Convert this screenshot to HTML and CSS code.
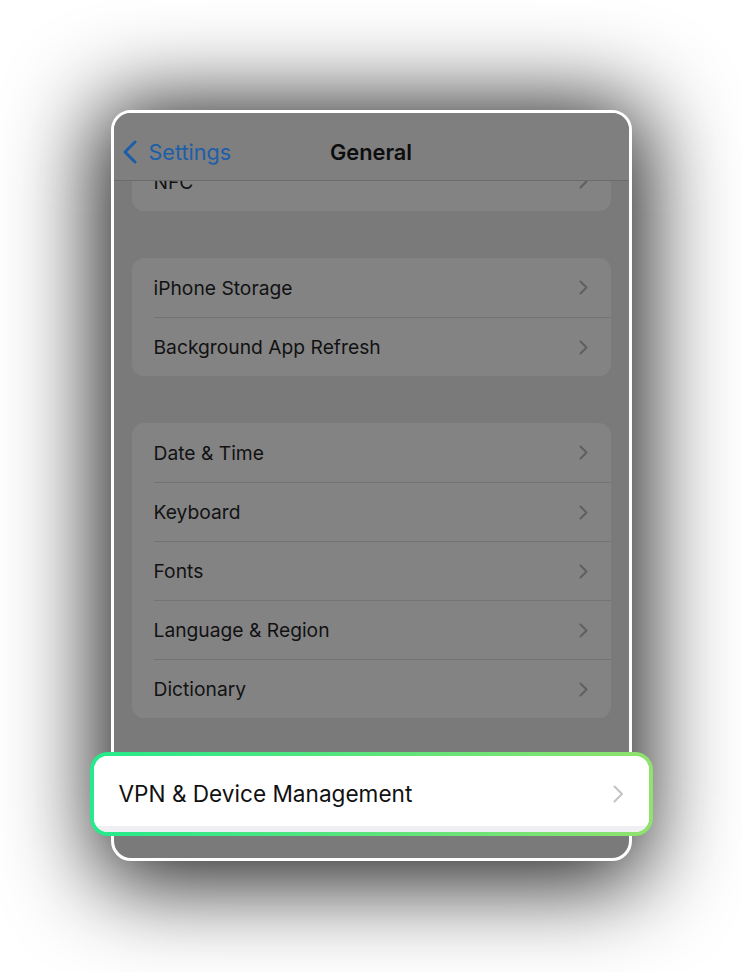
FILE: index.html
```html
<!DOCTYPE html>
<html lang="en">
<head>
<meta charset="utf-8">
<title>General</title>
<link rel="stylesheet" href="styles.css">
</head>
<body>
<div class="stage">
  <div class="frame">
    <div class="screen">
      <div class="navbar">
        <div class="back">
          <svg class="back-icon" width="16" height="24" viewBox="0 0 16 24"><path d="M13 2 L3 12 L13 22" fill="none" stroke="currentColor" stroke-width="3" stroke-linecap="round" stroke-linejoin="round"/></svg>
          <span>Settings</span>
        </div>
        <div class="title">General</div>
      </div>
      <div class="list">
        <div class="group first">
          <div class="row"><div class="row-inner"><span>NFC</span><svg class="chev" width="9" height="15" viewBox="0 0 9 15"><path d="M1.5 1.5 L7.5 7.5 L1.5 13.5" fill="none" stroke="currentColor" stroke-width="2" stroke-linecap="round" stroke-linejoin="round"/></svg></div></div>
        </div>
        <div class="group">
          <div class="row"><div class="row-inner"><span>iPhone Storage</span><svg class="chev" width="9" height="15" viewBox="0 0 9 15"><path d="M1.5 1.5 L7.5 7.5 L1.5 13.5" fill="none" stroke="currentColor" stroke-width="2" stroke-linecap="round" stroke-linejoin="round"/></svg></div></div>
          <div class="row"><div class="row-inner"><span>Background App Refresh</span><svg class="chev" width="9" height="15" viewBox="0 0 9 15"><path d="M1.5 1.5 L7.5 7.5 L1.5 13.5" fill="none" stroke="currentColor" stroke-width="2" stroke-linecap="round" stroke-linejoin="round"/></svg></div></div>
        </div>
        <div class="group">
          <div class="row"><div class="row-inner"><span>Date &amp; Time</span><svg class="chev" width="9" height="15" viewBox="0 0 9 15"><path d="M1.5 1.5 L7.5 7.5 L1.5 13.5" fill="none" stroke="currentColor" stroke-width="2" stroke-linecap="round" stroke-linejoin="round"/></svg></div></div>
          <div class="row"><div class="row-inner"><span>Keyboard</span><svg class="chev" width="9" height="15" viewBox="0 0 9 15"><path d="M1.5 1.5 L7.5 7.5 L1.5 13.5" fill="none" stroke="currentColor" stroke-width="2" stroke-linecap="round" stroke-linejoin="round"/></svg></div></div>
          <div class="row"><div class="row-inner"><span>Fonts</span><svg class="chev" width="9" height="15" viewBox="0 0 9 15"><path d="M1.5 1.5 L7.5 7.5 L1.5 13.5" fill="none" stroke="currentColor" stroke-width="2" stroke-linecap="round" stroke-linejoin="round"/></svg></div></div>
          <div class="row"><div class="row-inner"><span>Language &amp; Region</span><svg class="chev" width="9" height="15" viewBox="0 0 9 15"><path d="M1.5 1.5 L7.5 7.5 L1.5 13.5" fill="none" stroke="currentColor" stroke-width="2" stroke-linecap="round" stroke-linejoin="round"/></svg></div></div>
          <div class="row"><div class="row-inner"><span>Dictionary</span><svg class="chev" width="9" height="15" viewBox="0 0 9 15"><path d="M1.5 1.5 L7.5 7.5 L1.5 13.5" fill="none" stroke="currentColor" stroke-width="2" stroke-linecap="round" stroke-linejoin="round"/></svg></div></div>
        </div>
      </div>
    </div>
    <div class="spotlight">
      <div class="spot-row">
        <span>VPN &amp; Device Management</span>
        <svg class="spot-chev" width="11" height="18" viewBox="0 0 11 18"><path d="M1.5 1.5 L9 9 L1.5 16.5" fill="none" stroke="currentColor" stroke-width="2" stroke-linecap="round" stroke-linejoin="round"/></svg>
      </div>
    </div>
  </div>
</div>
</body>
</html>
```

FILE: styles.css
```css
* { box-sizing: border-box; }

html, body {
  margin: 0;
  padding: 0;
  background: #ffffff;
}

body {
  width: 742px;
  height: 972px;
  overflow: hidden;
  font-family: Inter, "Noto Sans", "Liberation Sans", sans-serif;
}

.stage {
  display: flex;
  justify-content: center;
  padding-top: 110px;
}

.frame {
  position: relative;
  width: 521px;
  height: 751px;
  border: 3px solid #ffffff;
  border-radius: 20px;
  box-shadow: 0 8px 90px 14px rgba(0, 0, 0, 0.88);
  background: #ffffff;
}

.screen {
  height: 100%;
  border-radius: 17px;
  overflow: hidden;
  background: #7a7a7b;
  display: flex;
  flex-direction: column;
}

.navbar {
  position: relative;
  z-index: 1;
  flex: none;
  height: 68px;
  padding-top: 10px;
  background: #7f7f80;
  border-bottom: 1px solid #6a6a6b;
  display: flex;
  align-items: center;
  justify-content: center;
}

.back {
  position: absolute;
  left: 8px;
  top: 10px;
  bottom: 0;
  display: flex;
  align-items: center;
  gap: 11px;
  color: #1d5ea8;
  font-size: 21.6px;
}

.back-icon {
  display: block;
}

.title {
  font-size: 21.8px;
  font-weight: 600;
  color: #0d0d0d;
}

.list {
  display: flex;
  flex-direction: column;
  gap: 47px;
  padding: 0 18px;
  margin-top: -29px;
}

.group {
  background: #838384;
  border-radius: 12px;
}

.row {
  height: 59px;
  padding-left: 22px;
}

.row-inner {
  height: 100%;
  display: flex;
  align-items: center;
  justify-content: space-between;
  padding-right: 23px;
  font-size: 19.25px;
  color: #121212;
}

.row + .row .row-inner {
  border-top: 1px solid #737374;
}

.chev {
  display: block;
  color: #5f5f60;
}

.spotlight {
  position: absolute;
  left: -24px;
  top: 639px;
  width: 563px;
  height: 84px;
  border: 4px solid transparent;
  border-radius: 18px;
  background:
    linear-gradient(#ffffff, #ffffff) padding-box,
    linear-gradient(90deg, #25ea8b 0%, #5be47c 50%, #90e26d 100%) border-box;
  box-shadow: inset 0 -6px 0 #efeff4;
  overflow: hidden;
}

.spot-row {
  height: 70px;
  padding-top: 5px;
  display: flex;
  align-items: center;
  justify-content: space-between;
  padding-right: 25px;
  padding-left: 25px;
  background: #ffffff;
  font-size: 22.6px;
  color: #111111;
}

.spot-chev {
  display: block;
  color: #c3c3c6;
}
```
